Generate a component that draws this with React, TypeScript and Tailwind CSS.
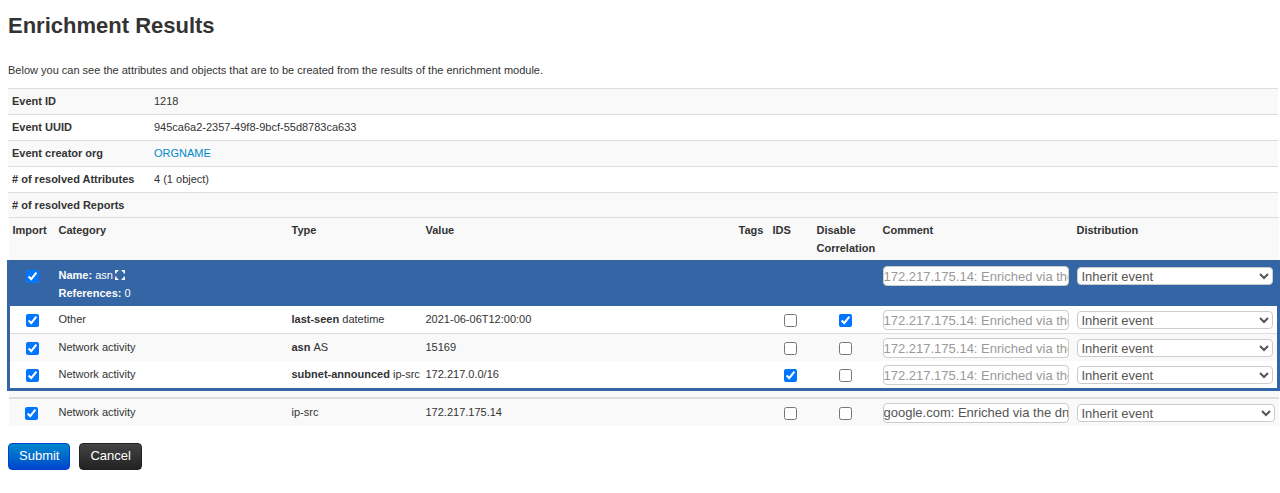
interface ResolvedAttribute {
  id: string;
  category: string;
  relation?: string;
  type: string;
  value: string;
  ids: boolean;
  disableCorrelation: boolean;
  comment?: string;
}

const EVENT_INFO = [
  { label: 'Event ID', value: '1218' },
  { label: 'Event UUID', value: '945ca6a2-2357-49f8-9bcf-55d8783ca633' },
  { label: 'Event creator org', value: 'ORGNAME', href: '#' },
  { label: '# of resolved Attributes', value: '4 (1 object)' },
  { label: '# of resolved Reports', value: '' },
];

const DEFAULT_COMMENT = '172.217.175.14: Enriched via the asn module';

const OBJECT_ATTRIBUTES: ResolvedAttribute[] = [
  { id: 'last-seen', category: 'Other', relation: 'last-seen', type: 'datetime', value: '2021-06-06T12:00:00', ids: false, disableCorrelation: true },
  { id: 'asn', category: 'Network activity', relation: 'asn', type: 'AS', value: '15169', ids: false, disableCorrelation: false },
  { id: 'subnet', category: 'Network activity', relation: 'subnet-announced', type: 'ip-src', value: '172.217.0.0/16', ids: true, disableCorrelation: false },
];

const ATTRIBUTE: ResolvedAttribute = {
  id: 'ip-src', category: 'Network activity', type: 'ip-src', value: '172.217.175.14', ids: false, disableCorrelation: false,
  comment: 'google.com: Enriched via the dns module',
};

const DISTRIBUTIONS = [
  'Inherit event', 'Your organisation only', 'This community only',
  'Connected communities', 'All communities', 'Sharing group',
];

const rowClasses = ['bg-white border-b border-[#ddd]', 'bg-[#f9f9f9]', 'bg-white'];
const cellClass = 'px-1 pt-1 pb-[3px]';
const objectCellClass = 'px-1 pt-[3px] pb-1';
const headClass = 'px-1 py-[3px] text-left font-bold';
const buttonClass = 'h-[27px] rounded-[4px] border px-[10px] text-[13px] leading-[18px] text-white';

function Check({ label, checked }: { label: string; checked: boolean }) {
  return (
    <input
      type="checkbox"
      aria-label={label}
      defaultChecked={checked}
      className="mx-auto mt-1 block size-[13px]"
    />
  );
}

function CommentInput({ value }: { value?: string }) {
  return (
    <input
      type="text"
      aria-label="Comment"
      placeholder={DEFAULT_COMMENT}
      defaultValue={value}
      className="block h-5 w-full rounded-[4px] border border-[#ccc] bg-white text-[13px] text-[#555] placeholder:text-[#999]"
    />
  );
}

function DistributionSelect() {
  return (
    <select
      aria-label="Distribution"
      className="my-px block h-[18px] w-full rounded-[4px] border border-[#ccc] bg-white text-[13px] leading-4 text-[#555]"
    >
      {DISTRIBUTIONS.map(d => <option key={d}>{d}</option>)}
    </select>
  );
}

function ExpandIcon() {
  return (
    <svg viewBox="0 0 10 10" className="size-[10px]" fill="none" stroke="currentColor" strokeWidth="1.5">
      <path d="M0.8 3.4V0.8H3.4M6.6 0.8H9.2V3.4M9.2 6.6V9.2H6.6M3.4 9.2H0.8V6.6" />
    </svg>
  );
}

function AttributeRow({ attribute, className }: { attribute: ResolvedAttribute; className: string }) {
  return (
    <tr className={className}>
      <td className={cellClass}><Check label="Import" checked /></td>
      <td className={cellClass}>{attribute.category}</td>
      <td className={`${cellClass} whitespace-nowrap`}>
        {attribute.relation && <b>{attribute.relation} </b>}
        {attribute.type}
      </td>
      <td className={cellClass}>{attribute.value}</td>
      <td className={cellClass} />
      <td className={cellClass}><Check label="IDS" checked={attribute.ids} /></td>
      <td className={cellClass}><Check label="Disable Correlation" checked={attribute.disableCorrelation} /></td>
      <td className={cellClass}><CommentInput value={attribute.comment} /></td>
      <td className={cellClass}><DistributionSelect /></td>
    </tr>
  );
}

export default function App() {
  return (
    <main className="overflow-x-hidden bg-white pt-2 pr-[2px] pb-6 pl-2 font-['Liberation_Sans',Arial,sans-serif] text-[11px] leading-[18px] text-[#333]">
      <h1 className="text-[22px] leading-9 font-bold">Enrichment Results</h1>
      <p className="mt-[17px]">
        Below you can see the attributes and objects that are to be created from the results of the enrichment module.
      </p>

      <table className="mt-[9px] w-full table-fixed border-collapse leading-[17px]">
        <colgroup>
          <col className="w-[142px]" />
          <col />
        </colgroup>
        <tbody>
          {EVENT_INFO.map(row => (
            <tr key={row.label} className="border-t border-[#ddd] odd:bg-[#f9f9f9]">
              <th scope="row" className="p-1 text-left font-bold">{row.label}</th>
              <td className="p-1">
                {row.href ? <a href={row.href} className="text-[#0088cc]">{row.value}</a> : row.value}
              </td>
            </tr>
          ))}
        </tbody>
      </table>

      <form onSubmit={e => e.preventDefault()}>
        <div className="-mt-px -mr-[2px] -ml-px">
          <table className="w-full table-fixed border-collapse">
            <colgroup>
              <col className="w-[46px]" />
              <col className="w-[233px]" />
              <col className="w-[134px]" />
              <col />
              <col className="w-[34px]" />
              <col className="w-[44px]" />
              <col className="w-[66px]" />
              <col className="w-[194px]" />
              <col className="w-[206px]" />
            </colgroup>
            <thead className="border-t border-[#ddd] bg-[#f9f9f9] align-top">
              <tr>
                <th className={headClass}>Import</th>
                <th className={headClass}>Category</th>
                <th className={headClass}>Type</th>
                <th className={headClass}>Value</th>
                <th className={headClass}>Tags</th>
                <th className={headClass}>IDS</th>
                <th className={headClass}>Disable Correlation</th>
                <th className={headClass}>Comment</th>
                <th className={headClass}>Distribution</th>
              </tr>
            </thead>
            <tbody className="border-3 border-[#3465a4] align-top">
              <tr className="bg-[#3465a4] text-white">
                <td className={objectCellClass}><Check label="Import object" checked /></td>
                <td className={objectCellClass} colSpan={6}>
                  <div className="flex items-center gap-[2px]">
                    <span><b>Name:</b> asn</span>
                    <button type="button" aria-label="Expand object"><ExpandIcon /></button>
                  </div>
                  <div><b>References:</b> 0</div>
                </td>
                <td className={objectCellClass}><CommentInput /></td>
                <td className={objectCellClass}><DistributionSelect /></td>
              </tr>
              {OBJECT_ATTRIBUTES.map((a, i) => (
                <AttributeRow key={a.id} attribute={a} className={rowClasses[i]} />
              ))}
            </tbody>
            <tbody className="align-top">
              <tr className="border-b-2 border-[#ddd] bg-[#f9f9f9]">
                <td colSpan={9} className="h-2" />
              </tr>
              <AttributeRow attribute={ATTRIBUTE} className="bg-[#f9f9f9]" />
            </tbody>
          </table>
        </div>

        <div className="mt-[17px] flex gap-[9px]">
          <button type="submit" className={`${buttonClass} border-[#0044cc] bg-linear-to-b from-[#0088cc] to-[#0044cc]`}>Submit</button>
          <button type="button" className={`${buttonClass} border-[#222] bg-linear-to-b from-[#444] to-[#222]`}>Cancel</button>
        </div>
      </form>
    </main>
  );
}
